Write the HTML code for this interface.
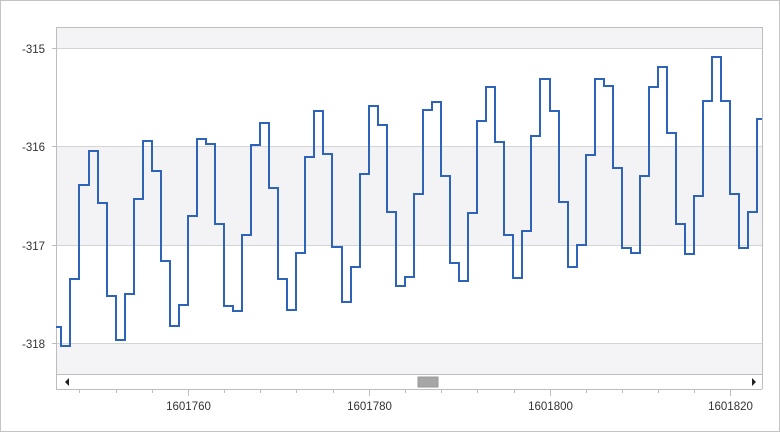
<!DOCTYPE html>
<html><head><meta charset="utf-8"><style>
html,body{margin:0;padding:0;background:#fff;}
body{width:780px;height:432px;overflow:hidden;font-family:"Liberation Sans",sans-serif;}
</style></head><body>
<svg width="780" height="432" xmlns="http://www.w3.org/2000/svg" style="display:block">
<rect x="0.5" y="0.5" width="779" height="431" fill="#fff" stroke="#c4c4c4"/>
<rect x="56" y="27" width="706" height="21" fill="#f4f4f6"/>
<rect x="56" y="146" width="706" height="99" fill="#f3f3f5"/>
<rect x="56" y="343" width="706" height="32" fill="#f4f4f6"/>
<g stroke="#d4d4d8" stroke-width="1">
<line x1="56" y1="48.5" x2="762" y2="48.5"/>
<line x1="56" y1="146.5" x2="762" y2="146.5"/>
<line x1="56" y1="245.5" x2="762" y2="245.5"/>
<line x1="56" y1="343.5" x2="762" y2="343.5"/>
</g>
<g stroke="#bdbdbd" stroke-width="1">
<line x1="56.5" y1="27" x2="56.5" y2="389"/>
<line x1="56" y1="27.5" x2="762" y2="27.5"/>
<line x1="762.5" y1="27" x2="762.5" y2="389"/>
<line x1="56" y1="374.5" x2="762" y2="374.5"/>
<line x1="56" y1="389.5" x2="762" y2="389.5"/>
<line x1="52" y1="48.5" x2="56" y2="48.5"/>
<line x1="52" y1="146.5" x2="56" y2="146.5"/>
<line x1="52" y1="245.5" x2="56" y2="245.5"/>
<line x1="52" y1="343.5" x2="56" y2="343.5"/>
</g>
<g stroke="#bdbdbd" stroke-width="1">
<line x1="79.5" y1="390" x2="79.5" y2="393"/><line x1="116.5" y1="390" x2="116.5" y2="393"/><line x1="152.5" y1="390" x2="152.5" y2="393"/>
<line x1="188.5" y1="390" x2="188.5" y2="396"/>
<line x1="224.5" y1="390" x2="224.5" y2="393"/><line x1="260.5" y1="390" x2="260.5" y2="393"/><line x1="296.5" y1="390" x2="296.5" y2="393"/><line x1="333.5" y1="390" x2="333.5" y2="393"/>
<line x1="369.5" y1="390" x2="369.5" y2="396"/>
<line x1="405.5" y1="390" x2="405.5" y2="393"/><line x1="441.5" y1="390" x2="441.5" y2="393"/><line x1="477.5" y1="390" x2="477.5" y2="393"/><line x1="514.5" y1="390" x2="514.5" y2="393"/>
<line x1="550.5" y1="390" x2="550.5" y2="396"/>
<line x1="586.5" y1="390" x2="586.5" y2="393"/><line x1="622.5" y1="390" x2="622.5" y2="393"/><line x1="658.5" y1="390" x2="658.5" y2="393"/><line x1="694.5" y1="390" x2="694.5" y2="393"/>
<line x1="730.5" y1="390" x2="730.5" y2="396"/>
</g>
<rect x="418" y="377" width="20" height="10" fill="#a6a6a6" stroke="#999"/>
<path d="M65 382 L69 378 L69 386 Z" fill="#222"/>
<path d="M752 378 L756 382 L752 386 Z" fill="#222"/>
<g font-size="11.5" fill="#333" font-family="Liberation Sans,sans-serif">
<text x="22" y="53">-315</text>
<text x="22" y="151">-316</text>
<text x="22" y="250">-317</text>
<text x="22" y="348">-318</text>
<text x="188.5" y="410" text-anchor="middle">1601760</text>
<text x="369.5" y="410" text-anchor="middle">1601780</text>
<text x="550.5" y="410" text-anchor="middle">1601800</text>
<text x="730.5" y="410" text-anchor="middle">1601820</text>
</g>
<path fill="none" stroke="#2d63b8" stroke-width="2" stroke-linejoin="miter" d="M56 327 H61 V346 H70 V279 H79 V185 H89 V151 H98 V203 H107 V296 H116 V340 H125 V294 H134 V199 H143 V141 H152 V171 H161 V261 H170 V326 H179 V305 H188 V216 H197 V139 H206 V144 H215 V224 H224 V306 H233 V311 H242 V235 H251 V145 H260 V123 H269 V188 H278 V279 H287 V310 H296 V253 H305 V157 H314 V111 H323 V154 H332 V247 H342 V302 H351 V267 H360 V174 H369 V106 H378 V125 H387 V212 H396 V286 H405 V277 H414 V194 H423 V110 H432 V102 H441 V176 H450 V263 H459 V281 H468 V213 H477 V121 H486 V87 H495 V142 H504 V235 H513 V278 H522 V231 H531 V136 H540 V79 H550 V111 H559 V202 H568 V267 H577 V245 H586 V155 H595 V79 H604 V86 H613 V168 H622 V248 H631 V253 H640 V176 H649 V87 H658 V67 H667 V133 H676 V224 H685 V254 H694 V196 H703 V101 H712 V57 H721 V101 H730 V194 H739 V248 H748 V212 H757 V119 H762"/>
</svg>
</body></html>
